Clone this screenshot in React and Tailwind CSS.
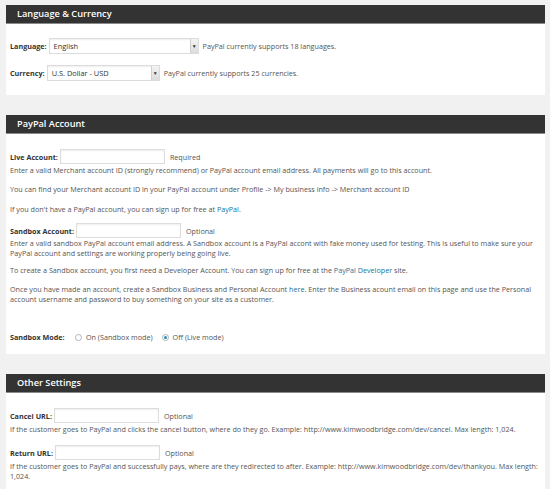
import React from "react";

const font = { fontFamily: '"Open Sans", "Liberation Sans", sans-serif' };

function Header({ title }) {
  return (
    <div className="h-[19px] bg-[#333333] border-b border-[#8a8a8a] flex items-center pl-[11px]">
      <span className="text-[9.2px] font-semibold text-white leading-none">{title}</span>
    </div>
  );
}

function Select({ width, value }) {
  return (
    <div
      className="h-[16px] border border-[#dcdcdc] bg-white flex items-center justify-between shadow-[inset_0_1px_2px_rgba(0,0,0,0.07)]"
      style={{ width }}
    >
      <span className="pl-[4px] text-[7.4px] text-[#333]">{value}</span>
      <span className="w-[8px] h-[14px] bg-gradient-to-b from-[#f4f4f4] to-[#dcdcdc] border-l border-[#cfcfcf] flex items-center justify-center text-[5px] text-[#333]">▼</span>
    </div>
  );
}

function Input({ width }) {
  return (
    <div
      className="h-[15px] border border-[#dddddd] bg-white shadow-[inset_0_1px_2px_rgba(0,0,0,0.07)]"
      style={{ width }}
    />
  );
}

function Radio({ checked }) {
  return (
    <span className="w-[7px] h-[7px] rounded-full border border-[#b4b4b4] bg-white flex items-center justify-center">
      {checked && <span className="w-[3px] h-[3px] rounded-full bg-[#1e8cbe]" />}
    </span>
  );
}

const A = ({ children }) => <a className="text-[#21759b]">{children}</a>;

export default function App() {
  return (
    <div className="w-[550px] h-[489px] overflow-hidden bg-[#f1f1f1] text-[#555] text-[7.2px] leading-[10px]" style={font}>
      <div className="pt-[5px] pl-[6px] w-[545px] flex flex-col">
        {/* Panel 1 */}
        <Header title="Language & Currency" />
        <div className="bg-white h-[71px] pl-[4px] pt-[14px] flex flex-col gap-[11px]">
          <div className="flex items-center gap-[2px]">
            <span className="font-bold text-[#333]">Language:</span>
            <Select width={150} value="English" />
            <span className="ml-[2px]">PayPal currently supports 18 languages.</span>
          </div>
          <div className="flex items-center gap-[2px]">
            <span className="font-bold text-[#333]">Currency:</span>
            <Select width={113} value="U.S. Dollar - USD" />
            <span className="ml-[2px]">PayPal currently supports 25 currencies.</span>
          </div>
        </div>

        <div className="h-[20px]" />

        {/* Panel 2 */}
        <Header title="PayPal Account" />
        <div className="bg-white h-[220px] pl-[4px] pr-[12px] pt-[15px]">
          <div className="flex items-center gap-[2px]">
            <span className="font-bold text-[#333]">Live Account:</span>
            <Input width={105} />
            <span className="ml-[3px]">Required</span>
          </div>
          <p className="mt-[1px]">Enter a valid Merchant account ID (strongly recommend) or PayPal account email address. All payments will go to this account.</p>
          <p className="mt-[9px]">You can find your Merchant account ID in your PayPal account under Profile -&gt; My business info -&gt; Merchant account ID</p>
          <p className="mt-[10px]">If you don't have a PayPal account, you can sign up for free at <A>PayPal</A>.</p>
          <div className="flex items-center gap-[2px] mt-[9px]">
            <span className="font-bold text-[#333]">Sandbox Account:</span>
            <Input width={105} />
            <span className="ml-[3px]">Optional</span>
          </div>
          <p>Enter a valid sandbox PayPal account email address. A Sandbox account is a PayPal accont with fake money used for testing. This is useful to make sure your PayPal account and settings are working properly being going live.</p>
          <p className="mt-[7px]">To create a Sandbox account, you first need a Developer Account. You can sign up for free at the <A>PayPal Developer</A> site.</p>
          <p className="mt-[9px]">Once you have made an account, create a Sandbox Business and Personal Account <A>here</A>. Enter the Business acount email on this page and use the Personal account username and password to buy something on your site as a customer.</p>
          <div className="flex items-center mt-[28px]">
            <span className="font-bold text-[#333] w-[65px]">Sandbox Mode:</span>
            <Radio />
            <span className="ml-[4px]">On (Sandbox mode)</span>
            <span className="ml-[9px]"><Radio checked /></span>
            <span className="ml-[4px]">Off (Live mode)</span>
          </div>
        </div>

        <div className="h-[20px]" />

        {/* Panel 3 */}
        <Header title="Other Settings" />
        <div className="bg-white h-[120px] pl-[4px] pr-[6px] pt-[15px]">
          <div className="flex items-center gap-[2px]">
            <span className="font-bold text-[#333]">Cancel URL:</span>
            <Input width={105} />
            <span className="ml-[3px]">Optional</span>
          </div>
          <p className="mt-[1px]">If the customer goes to PayPal and clicks the cancel button, where do they go. Example: http://www.kimwoodbridge.com/dev/cancel. Max length: 1,024.</p>
          <div className="flex items-center gap-[2px] mt-[11px]">
            <span className="font-bold text-[#333]">Return URL:</span>
            <Input width={105} />
            <span className="ml-[3px]">Optional</span>
          </div>
          <p className="mt-[1px]">If the customer goes to PayPal and successfully pays, where are they redirected to after. Example: http://www.kimwoodbridge.com/dev/thankyou. Max length: 1,024.</p>
        </div>
      </div>
    </div>
  );
}
